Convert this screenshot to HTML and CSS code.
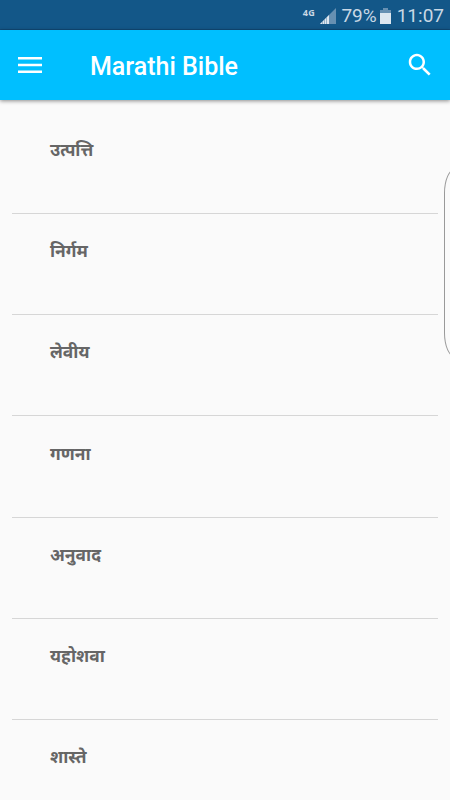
FILE: index.html
```html
<!DOCTYPE html>
<html lang="en">
    <head>
        <meta charset="utf-8" />
        <title>Marathi Bible</title>
        <link rel="stylesheet" href="styles.css">
    </head>

    <body>
        <div id="status">
            <span class="network">4G</span>
            <svg class="signal" width="16" height="16" viewBox="0 0 16 16">
                <path d="M0 16L16 0V16Z" fill="#6790b2"/>
                <path d="M0 16L9 7V16Z" fill="#dde7f0"/>
                <path d="M2.5 13v3M4.5 11v5M6.5 9v7" stroke="#6790b2" stroke-width=".6"/>
            </svg>
            <span class="percent">79%</span>
            <svg class="battery" width="11" height="16" viewBox="0 0 11 16">
                <path d="M3 0h5v2h3v3H0V2h3z" fill="#6790b2"/>
                <path d="M0 5h11v11H0z" fill="#dde7f0"/>
            </svg>
            <span class="time">11:07</span>
        </div>

        <header>
            <svg class="menu" width="24" height="16" viewBox="0 0 24 16">
                <path d="M0 0h24v2.6H0zM0 6.7h24v2.6H0zM0 13.4h24V16H0z" fill="#fff"/>
            </svg>
            <h1>Marathi Bible</h1>
            <svg class="search" width="30" height="30" viewBox="0 0 24 24">
                <path d="M15.5 14h-.79l-.28-.27C15.41 12.59 16 11.11 16 9.5 16 5.91 13.09 3 9.5 3S3 5.91 3 9.5 5.91 16 9.5 16c1.61 0 3.09-.59 4.23-1.57l.27.28v.79l5 4.99L20.49 19l-4.99-5zm-6 0C7.01 14 5 11.99 5 9.5S7.01 5 9.5 5 14 7.01 14 9.5 11.99 14 9.5 14z" fill="#fff"/>
            </svg>
        </header>

        <ul id="books">
            <li>उत्पत्ति</li>
            <li>निर्गम</li>
            <li>लेवीय</li>
            <li>गणना</li>
            <li>अनुवाद</li>
            <li>यहोशवा</li>
            <li>शास्ते</li>
        </ul>

        <!-- edge panel handle -->
        <div id="edge"></div>
    </body>
</html>
```
FILE: styles.css
```css
* {
    box-sizing: border-box;
}
body {
    margin: 0;
    height: 800px;
    position: relative;
    display: flex;
    flex-direction: column;
    overflow: hidden;
    background-color: #fafafa;
    font-family: Roboto, "Noto Sans", sans-serif;
}
#status {
    display: flex;
    align-items: center;
    justify-content: flex-end;
    flex: none;
    height: 30px;
    padding: 2px 6px 0 0;
    border-bottom: 1px solid #104a78;
    background-color: #135788;
    color: #c9d8e5;
    font-size: 19px;
}
.network {
    margin: 0 5px 7px 0;
    font: bold 9px "Open Sans", sans-serif;
    letter-spacing: 0.5px;
}
.percent {
    margin: 0 3px 0 5px;
}
.time {
    margin-left: 6px;
}
header {
    display: flex;
    align-items: center;
    flex: none;
    height: 70px;
    padding: 0 15px 0 18px;
    background-color: #00bfff;
    box-shadow: 0 1px 4px rgba(0, 0, 0, 0.45);
    color: white;
}
h1 {
    flex: 1;
    margin: 3px 0 0 48px;
    font-size: 25px;
    font-weight: 500;
}
#books {
    flex: none;
    margin: 0;
    padding: 12.5px 12px 0;
    list-style: none;
}
#books li {
    height: 101.25px;
    padding: 23.4px 38px 0;
    border-bottom: 1px solid #d6d6d6;
    color: #666;
    font-size: 17.4px;
    font-weight: bold;
    line-height: 28px;
}
#edge {
    position: absolute;
    top: 169px;
    right: -16px;
    width: 22px;
    height: 188px;
    border: 1px solid #999;
    border-radius: 11px / 24px;
    background-color: #fafafa;
}
```
